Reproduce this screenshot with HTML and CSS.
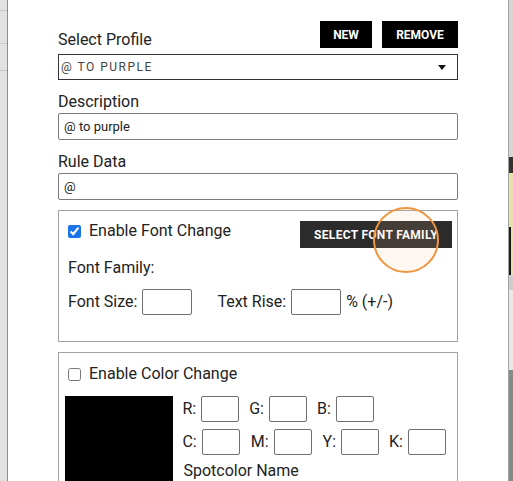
FILE: index.html
```html
<!DOCTYPE html>
<html lang="en">
<head>
  <meta charset="UTF-8" />
  <meta name="viewport" content="width=device-width, initial-scale=1.0"/>
  <title>Rule Profile</title>
  <link rel="stylesheet" href="styles.css">
</head>
<body>
  <!-- page behind the dialog, left side -->
  <div class="edge-left">
    <div class="edge-row r1"></div>
    <div class="edge-row r2"></div>
    <div class="edge-row r3"></div>
  </div>

  <div class="dialog">
    <div class="profile-head">
      <label class="field-label head-label" for="profile">Select Profile</label>
      <div class="head-buttons">
        <button class="btn-dark btn-new" type="button">NEW</button>
        <button class="btn-dark btn-remove" type="button">REMOVE</button>
      </div>
    </div>
    <div class="select-box" id="profile">
      <span class="select-value">@ to purple</span>
      <span class="caret"></span>
    </div>

    <label class="field-label" for="description">Description</label>
    <input class="text-input" type="text" id="description" value="@ to purple" />

    <label class="field-label" for="ruleData">Rule Data</label>
    <input class="text-input" type="text" id="ruleData" value="@" />

    <!-- font change -->
    <div class="group font-group">
      <div class="font-top">
        <label class="check-row">
          <input type="checkbox" checked />
          <span>Enable Font Change</span>
        </label>
        <button class="btn-font" type="button">SELECT FONT FAMILY</button>
      </div>
      <div class="font-family">Font Family:</div>
      <div class="inline-row">
        <span>Font Size:</span>
        <input class="box-input" type="text" />
        <span class="spaced">Text Rise:</span>
        <input class="box-input" type="text" />
        <span class="after">% (+/-)</span>
      </div>
    </div>

    <!-- color change -->
    <div class="group color-group">
      <label class="check-row">
        <input type="checkbox" />
        <span>Enable Color Change</span>
      </label>
      <div class="color-body">
        <div class="swatch"></div>
        <div class="color-fields">
          <div class="inline-row">
            <span>R:</span><input class="small-input" type="text" />
            <span class="gap">G:</span><input class="small-input" type="text" />
            <span class="gap">B:</span><input class="small-input" type="text" />
          </div>
          <div class="inline-row cmyk">
            <span>C:</span><input class="small-input" type="text" />
            <span class="gap-wide">M:</span><input class="small-input" type="text" />
            <span class="gap-wide">Y:</span><input class="small-input" type="text" />
            <span class="gap">K:</span><input class="small-input" type="text" />
          </div>
          <div class="spot-name">Spotcolor Name</div>
        </div>
      </div>
    </div>

    <!-- click highlight -->
    <div class="click-ring"></div>
  </div>

  <!-- page behind the dialog, right side -->
  <div class="edge-right">
    <div class="strip s1"></div>
    <div class="strip s2"></div>
    <div class="strip s3"><div class="strip-mark"></div></div>
    <div class="strip s4"></div>
    <div class="strip s5"></div>
    <div class="strip s6"></div>
  </div>
</body>
</html>
```

FILE: styles.css
```css
body {
  margin: 0;
  height: 481px;
  overflow: hidden;
  display: flex;
  font-family: Roboto, "Liberation Sans", sans-serif;
  color: #222;
}

.edge-left {
  width: 7px;
  background-color: #e2e2e2;
}

.edge-row {
  border-bottom: 1px solid #c8c8c8;
}

.r1 { height: 10px; }
.r2 { height: 32px; }
.r3 { height: 26px; }

.edge-right {
  width: 4px;
  display: flex;
  flex-direction: column;
}

.strip { flex: none; }
.s1 { height: 157px; background-color: #d6d6d6; }
.s2 { height: 16px; background-color: #34342f; }
.s3 { height: 102px; background-color: #e4e2a4; padding-top: 54px; box-sizing: border-box; }
.s4 { height: 15px; background-color: #cdcdcd; }
.s5 { height: 80px; background-color: #e8e8e8; }
.s6 { flex: 1; background-color: #7b8f88; }

.strip-mark {
  width: 2px;
  height: 48px;
  background-color: #1a1a1a;
}

.dialog {
  position: relative;
  width: 400px;
  height: 481px;
  box-sizing: border-box;
  overflow: hidden;
  padding: 21px 50px 0;
  background-color: #fff;
  border-left: 1px solid #8c8c8c;
  border-right: 1px solid #a3a3a3;
  flex: none;
  width: 502px;
}

.profile-head {
  display: flex;
  justify-content: space-between;
  align-items: flex-end;
  margin-bottom: 6px;
}

.head-buttons {
  display: flex;
  gap: 10px;
}

.btn-dark, .btn-font {
  height: 27px;
  padding: 0;
  border: none;
  border-radius: 0;
  background-color: #000;
  color: #fff;
  font-family: Roboto, "Liberation Sans", sans-serif;
  font-size: 12px;
  font-weight: bold;
}

.btn-new { width: 52px; }
.btn-remove { width: 76px; }

.btn-font {
  width: 152px;
  letter-spacing: 0.3px;
  background-color: #2c2c2c;
}

.field-label {
  display: block;
  font-size: 16px;
  line-height: 16px;
  margin: 14px 0 3px;
}

.head-label {
  margin: 0;
}

.select-box {
  height: 26px;
  box-sizing: border-box;
  border: 1px solid #333;
  display: flex;
  align-items: center;
  justify-content: space-between;
  padding: 0 11px 0 2px;
}

.select-value {
  font-size: 12px;
  letter-spacing: 1.5px;
  text-transform: uppercase;
  color: #444;
}

.caret {
  width: 0;
  height: 0;
  border-left: 4px solid transparent;
  border-right: 4px solid transparent;
  border-top: 5px solid #111;
}

.text-input {
  display: block;
  width: 100%;
  height: 27px;
  box-sizing: border-box;
  border: 1px solid #7a7a7a;
  border-radius: 2px;
  padding: 0 5px;
  font-family: Roboto, "Liberation Sans", sans-serif;
  font-size: 13px;
  color: #222;
}

.group {
  border: 1px solid #a2a2a2;
  margin-top: 10px;
  font-size: 16px;
  line-height: 16px;
}

.font-group {
  padding: 10px 5px 26px 9px;
}

.font-top {
  display: flex;
  justify-content: space-between;
  align-items: flex-start;
}

.check-row {
  display: flex;
  align-items: center;
  gap: 8px;
}

.check-row input {
  width: 13px;
  height: 13px;
  margin: 0;
  accent-color: #1a73e8;
}

.font-top .check-row {
  margin-top: 2px;
}

.font-family {
  margin-top: 12px;
}

.inline-row {
  display: flex;
  align-items: center;
  margin-top: 13px;
}

.inline-row span {
  margin-right: 5px;
}

.inline-row .spaced {
  margin-left: 25px;
}

.inline-row .after {
  margin-left: 5px;
}

.box-input, .small-input {
  width: 50px;
  height: 26px;
  box-sizing: border-box;
  border: 1px solid #707070;
  border-radius: 2px;
  margin: 0;
}

.small-input {
  width: 38px;
}

.color-group {
  padding: 13px 11px 0 6px;
  height: 140px;
}

.color-group > .check-row {
  margin-left: 3px;
}

.color-body {
  display: flex;
  margin-top: 14px;
}

.swatch {
  width: 110px;
  height: 110px;
  background-color: #000;
  margin-right: 9px;
}

.color-fields .inline-row {
  margin-top: 0;
}

.color-fields .cmyk {
  margin-top: 7px;
}

.inline-row .gap {
  margin-left: 10px;
}

.inline-row .gap-wide {
  margin-left: 11px;
}

.spot-name {
  margin-top: 8px;
  padding-bottom: 2px;
  padding-left: 1px;
  width: 261px;
  border-bottom: 1px solid #555;
}

.click-ring {
  position: absolute;
  left: 365px;
  top: 207px;
  width: 66px;
  height: 66px;
  box-sizing: border-box;
  border: 2.5px solid #f0953f;
  border-radius: 50%;
  background-color: rgba(255, 190, 140, 0.12);
}
```
